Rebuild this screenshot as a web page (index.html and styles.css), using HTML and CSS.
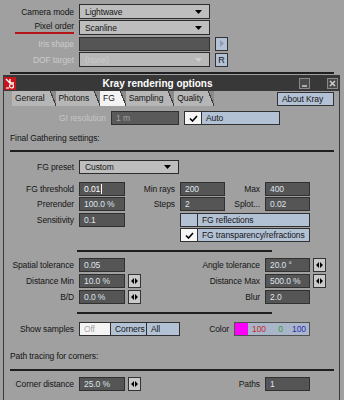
FILE: index.html
```html
<!DOCTYPE html>
<html lang="en">
<head>
    <meta charset="UTF-8">
    <meta name="viewport" content="width=device-width, initial-scale=1.0">
    <title>Kray rendering options</title>
    <link rel="stylesheet" href="styles.css">
</head>
<body>
    <div class="top">
        <div class="row">
            <span class="lbl">Camera mode</span>
            <div class="drop"><span>Lightwave</span><svg width="7" height="4"><path d="M0 0h7L3.5 4z" fill="#000"/></svg></div>
        </div>
        <div class="row">
            <span class="lbl"><span class="marked">Pixel order</span></span>
            <div class="drop"><span>Scanline</span><svg width="7" height="4"><path d="M0 0h7L3.5 4z" fill="#000"/></svg></div>
        </div>
        <div class="row">
            <span class="lbl off">Iris shape</span>
            <div class="fld wide"></div>
            <div class="sbtn"><svg width="4" height="7"><path d="M0 0v7l4-3.5z" fill="#8d9bb0"/></svg></div>
        </div>
        <div class="row">
            <span class="lbl off">DOF target</span>
            <div class="drop off"><span>(none)</span><svg width="7" height="4"><path d="M0 0h7L3.5 4z" fill="#cfcfcf"/></svg></div>
            <div class="sbtn">R</div>
        </div>
    </div>
    <div class="rule"></div>

    <div class="window">
        <div class="titlebar">
            <svg class="logo" width="12" height="13">
                <rect width="12" height="13" fill="#c4161c"/>
                <path d="M2 2l4 4M6 2v4h4" stroke="#fff" stroke-width="1.4" fill="none"/>
                <circle cx="7.5" cy="9" r="2" stroke="#fff" stroke-width="1.2" fill="none"/>
                <path d="M2 11h3" stroke="#fff" stroke-width="1.2"/>
            </svg>
            <span class="title">Kray rendering options</span>
            <span class="wbtn min"><svg width="7" height="7"><path d="M1 6h5" stroke="#cfcfcf" stroke-width="1.5"/></svg></span>
            <span class="wbtn close"><svg width="7" height="7"><path d="M1 1l5 5M6 1L1 6" stroke="#cfcfcf" stroke-width="1.5"/></svg></span>
        </div>

        <div class="tabbar">
            <span class="tab">General</span>
            <span class="tab">Photons</span>
            <span class="tab active">FG</span>
            <span class="tab">Sampling</span>
            <span class="tab">Quality</span>
            <span class="about">About Kray</span>
        </div>

        <div class="content">
            <div class="gi">
                <span class="gilbl">GI resolution</span>
                <div class="fld dim">1 m</div>
                <div class="check auto">
                    <span class="box on"><svg width="9" height="7"><path d="M1 3.5l2.5 2.5L8 1" stroke="#000" stroke-width="1.6" fill="none"/></svg></span>
                    <span class="txt">Auto</span>
                </div>
            </div>

            <div class="heading">Final Gathering settings:</div>
            <div class="hr"></div>

            <div class="preset">
                <span class="glbl">FG preset</span>
                <div class="drop short"><span>Custom</span><svg width="7" height="4"><path d="M0 0h7L3.5 4z" fill="#000"/></svg></div>
            </div>

            <div class="fg">
                <span class="glbl">FG threshold</span>
                <div class="fld edit">0.01<i class="caret"></i></div>
                <span class="glbl">Min rays</span>
                <div class="fld">200</div>
                <span class="glbl">Max</span>
                <div class="fld">400</div>

                <span class="glbl">Prerender</span>
                <div class="fld">100.0 %</div>
                <span class="glbl">Steps</span>
                <div class="fld">2</div>
                <span class="glbl">Splot...</span>
                <div class="fld">0.02</div>

                <span class="glbl">Sensitivity</span>
                <div class="fld">0.1</div>
                <span></span>
                <div class="check span3">
                    <span class="box"></span>
                    <span class="txt">FG reflections</span>
                </div>

                <span></span><span></span><span></span>
                <div class="check span3">
                    <span class="box on"><svg width="9" height="7"><path d="M1 3.5l2.5 2.5L8 1" stroke="#000" stroke-width="1.6" fill="none"/></svg></span>
                    <span class="txt">FG transparency/refractions</span>
                </div>
            </div>
            <div class="hr short"></div>

            <div class="sp">
                <span class="glbl">Spatial tolerance</span>
                <div class="fld">0.05</div>
                <span></span>
                <span class="glbl">Angle tolerance</span>
                <div class="fld">20.0 °</div>
                <span class="spin"><svg width="7" height="6"><path d="M3 0v6L0 3zM4 0v6l3-3z" fill="#000"/></svg></span>

                <span class="glbl">Distance Min</span>
                <div class="fld">10.0 %</div>
                <span class="spin"><svg width="7" height="6"><path d="M3 0v6L0 3zM4 0v6l3-3z" fill="#000"/></svg></span>
                <span class="glbl">Distance Max</span>
                <div class="fld">500.0 %</div>
                <span class="spin"><svg width="7" height="6"><path d="M3 0v6L0 3zM4 0v6l3-3z" fill="#000"/></svg></span>

                <span class="glbl">B/D</span>
                <div class="fld">0.0 %</div>
                <span class="spin"><svg width="7" height="6"><path d="M3 0v6L0 3zM4 0v6l3-3z" fill="#000"/></svg></span>
                <span class="glbl">Blur</span>
                <div class="fld">2.0</div>
                <span></span>
            </div>
            <div class="hr short"></div>

            <div class="samples">
                <span class="glbl">Show samples</span>
                <div class="seg">
                    <span class="segoff">Off</span>
                    <span class="segc">Corners</span>
                    <span class="sega">All</span>
                </div>
                <span class="collbl">Color</span>
                <div class="color">
                    <span class="swatch"></span>
                    <span class="cr">100</span>
                    <span class="cg">0</span>
                    <span class="cb">100</span>
                </div>
            </div>

            <div class="heading second">Path tracing for corners:</div>
            <div class="hr tight"></div>

            <div class="sp corner">
                <span class="glbl">Corner distance</span>
                <div class="fld">25.0 %</div>
                <span class="spin"><svg width="7" height="6"><path d="M3 0v6L0 3zM4 0v6l3-3z" fill="#000"/></svg></span>
                <span class="glbl">Paths</span>
                <div class="fld">1</div>
                <span></span>
            </div>
        </div>
    </div>
</body>
</html>
```

FILE: styles.css
```css
body {
    margin: 0;
    width: 344px;
    height: 400px;
    overflow: hidden;
    background-color: #a0a0a0;
    font-family: "Liberation Sans", Arial, sans-serif;
    font-size: 8.5px;
    letter-spacing: -0.1px;
    color: #151515;
}

/* camera panel above the window */
.top {
    padding-top: 4px;
}
.row {
    display: flex;
    align-items: center;
    height: 15px;
    margin-bottom: 1px;
}
.lbl {
    width: 74px;
    margin-right: 5px;
    text-align: right;
}
.off {
    color: #cbcbcb;
}
.marked {
    display: inline-block;
    padding-left: 19px;
    line-height: 11px;
    border-bottom: 2px solid #b5141b;
}
.drop {
    width: 131px;
    height: 15px;
    box-sizing: border-box;
    border: 1px solid #2c2c2c;
    background-color: #bebebe;
    display: flex;
    align-items: center;
    justify-content: space-between;
    padding: 0 7px 0 5px;
}
.drop.short {
    width: 100px;
    height: 14px;
}
.drop.off {
    background-color: #b8b8b8;
}
.sbtn {
    width: 13px;
    height: 14px;
    box-sizing: border-box;
    margin-left: 5px;
    border: 1px solid #333;
    background-color: #b3c1d5;
    display: flex;
    align-items: center;
    justify-content: center;
    font-size: 9px;
}
.rule {
    height: 2px;
    background-color: #1f1f1f;
    margin: 5px 10px 1px 10px;
}

/* window */
.window {
    margin-left: 3px;
    width: 337px;
    height: 330px;
    box-sizing: border-box;
    border-left: 1px solid #3a3a3a;
    border-right: 1px solid #3a3a3a;
}
.titlebar {
    height: 16px;
    background-color: #383838;
    display: flex;
    align-items: center;
}
.title {
    flex: 1;
    text-align: center;
    font-weight: bold;
    font-size: 10px;
    letter-spacing: 0;
    color: #fff;
}
.wbtn {
    width: 11px;
    height: 11px;
    box-sizing: border-box;
    border: 1px solid #8a8a8a;
    background-color: #4a4a4a;
    display: flex;
    align-items: center;
    justify-content: center;
}
.wbtn.min {
    margin-right: 17px;
}
.wbtn.close {
    margin-right: 1px;
}
.tabbar {
    height: 15px;
    display: flex;
    padding-left: 8px;
}
.tab {
    position: relative;
    padding: 0 11px 0 3px;
    background-color: #b6b6b6;
    line-height: 15px;
}
.tab::after {
    content: "";
    position: absolute;
    right: 0;
    top: 0;
    width: 6px;
    height: 15px;
    background: linear-gradient(to top right, transparent 46%, #3c3c3c 46%, #3c3c3c 56%, #8a8a8a 56%);
}
.tab.active {
    background-color: #f3f3f3;
}
.about {
    margin-left: auto;
    margin-right: 5px;
    margin-top: 1px;
    width: 57px;
    height: 14px;
    box-sizing: border-box;
    border: 1px solid #333;
    background-color: #b3c1d5;
    padding-left: 4px;
    line-height: 12px;
}

/* tab content */
.content {
    display: flex;
    flex-direction: column;
}
.gi {
    display: flex;
    align-items: center;
    margin-top: 5px;
    height: 14px;
}
.gilbl {
    width: 102px;
    margin-right: 5px;
    text-align: right;
    color: #c6c6c6;
}
.fld {
    height: 14px;
    box-sizing: border-box;
    background-color: #555;
    border: 1px solid #303030;
    color: #dde4ee;
    padding-left: 4px;
    display: flex;
    align-items: center;
    white-space: nowrap;
}
.fld.wide {
    width: 131px;
    height: 14px;
}
.fld.dim {
    width: 68px;
    color: #a4a4a4;
    background-color: #5a5a5a;
}
.fld.edit {
    color: #fff;
}
.caret {
    width: 1px;
    height: 10px;
    background-color: #fff;
    margin-left: 1px;
}
.check {
    display: flex;
    height: 14px;
    box-sizing: border-box;
    border: 1px solid #303030;
    background-color: #b3c1d5;
    white-space: nowrap;
}
.check.auto {
    margin-left: 5px;
    width: 96px;
}
.check .box {
    flex: none;
    width: 16px;
    border-right: 1px solid #303030;
    display: flex;
    align-items: center;
    justify-content: center;
}
.check .box.on {
    background-color: #f6f6f6;
}
.check .txt {
    padding-left: 4px;
    line-height: 12px;
}
.heading {
    margin: 7px 0 0 6px;
    height: 12px;
    line-height: 12px;
}
.heading.second {
    margin-top: 14px;
}
.hr {
    height: 2px;
    background-color: #1f1f1f;
    margin: 6px 5px 0 6px;
}
.hr.tight {
    margin-top: 7px;
}
.hr.short {
    margin: 8px 67px 0 73px;
}
.glbl {
    padding-right: 5px;
    text-align: right;
    white-space: nowrap;
    line-height: 14px;
}
.preset {
    display: flex;
    align-items: center;
    margin-top: 8px;
}
.preset .glbl {
    width: 70px;
}
.fg {
    display: grid;
    grid-template-columns: 75px 46px 55px 45px 40px 45px;
    grid-template-rows: 15px 16px 15px 14px;
    margin-top: 8px;
}
.span3 {
    grid-column: span 3;
}
.sp {
    display: grid;
    grid-template-columns: 75px 46px 16px 124px 45px 17px;
    grid-template-rows: 16px 16px 14px;
    margin-top: 6px;
}
.sp.corner {
    grid-template-rows: 14px;
}
.spin {
    width: 13px;
    height: 14px;
    box-sizing: border-box;
    margin-left: 3px;
    border: 1px solid #333;
    background-color: #cacaca;
    display: flex;
    align-items: center;
    justify-content: center;
}
.samples {
    display: flex;
    align-items: center;
    margin-top: 8px;
    height: 14px;
}
.samples .glbl {
    width: 70px;
}
.seg {
    display: flex;
    height: 14px;
    box-sizing: border-box;
    border: 1px solid #303030;
    background-color: #b3c1d5;
    line-height: 12px;
}
.seg span {
    padding-left: 4px;
    box-sizing: border-box;
}
.segoff {
    width: 31px;
    background-color: #f4f4f4;
    color: #a8a8a8;
    border-right: 1px solid #303030;
}
.segc {
    width: 36px;
    border-right: 1px solid #303030;
}
.sega {
    width: 32px;
}
.collbl {
    width: 49px;
    margin-right: 5px;
    text-align: right;
}
.color {
    display: flex;
    width: 76px;
    height: 14px;
    box-sizing: border-box;
    border: 1px solid #505050;
    background-color: #a9b6c9;
    line-height: 12px;
}
.swatch {
    width: 13px;
    background-color: #ff00ff;
}
.cr, .cg, .cb {
    text-align: right;
}
.cr {
    width: 18px;
    color: #c8282e;
}
.cg {
    width: 17px;
    color: #3a9a3a;
}
.cb {
    width: 23px;
    color: #2d2db8;
}
```
